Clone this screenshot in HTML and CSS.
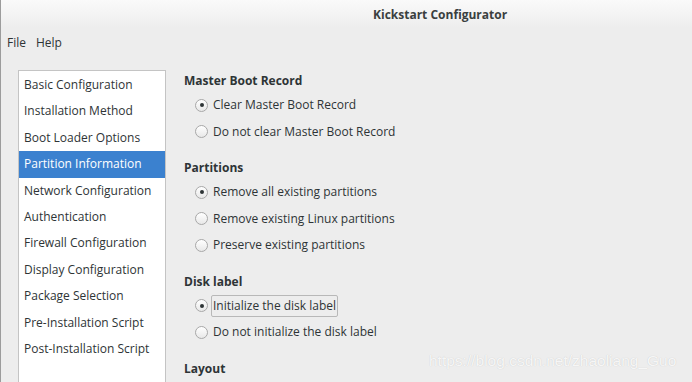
FILE: index.html
```html
<!DOCTYPE html>
<html lang="en">
  <head>
    <meta charset="UTF-8" />
    <meta name="viewport" content="width=device-width, initial-scale=1.0" />
    <title>Kickstart Configurator</title>
    <link rel="stylesheet" href="styles.css">
  </head>
  <body>
    <div class="window">
      <div class="titlebar">
        <span class="title">Kickstart Configurator</span>
      </div>

      <div class="menubar">
        <span class="menu-item">File</span>
        <span class="menu-item">Help</span>
      </div>

      <div class="main">
        <ul class="sidebar">
          <li>Basic Configuration</li>
          <li>Installation Method</li>
          <li>Boot Loader Options</li>
          <li class="selected">Partition Information</li>
          <li>Network Configuration</li>
          <li>Authentication</li>
          <li>Firewall Configuration</li>
          <li>Display Configuration</li>
          <li>Package Selection</li>
          <li>Pre-Installation Script</li>
          <li>Post-Installation Script</li>
        </ul>

        <div class="content">
          <div class="group">
            <div class="group-title">Master Boot Record</div>
            <div class="radio-row">
              <span class="radio checked"></span>
              <span class="label">Clear Master Boot Record</span>
            </div>
            <div class="radio-row">
              <span class="radio"></span>
              <span class="label">Do not clear Master Boot Record</span>
            </div>
          </div>

          <div class="group">
            <div class="group-title">Partitions</div>
            <div class="radio-row">
              <span class="radio checked"></span>
              <span class="label">Remove all existing partitions</span>
            </div>
            <div class="radio-row">
              <span class="radio"></span>
              <span class="label">Remove existing Linux partitions</span>
            </div>
            <div class="radio-row">
              <span class="radio"></span>
              <span class="label">Preserve existing partitions</span>
            </div>
          </div>

          <div class="group">
            <div class="group-title">Disk label</div>
            <div class="radio-row">
              <span class="radio checked"></span>
              <span class="label focused">Initialize the disk label</span>
            </div>
            <div class="radio-row">
              <span class="radio"></span>
              <span class="label">Do not initialize the disk label</span>
            </div>
          </div>

          <div class="group">
            <div class="group-title">Layout</div>
            <div class="layout-frame"></div>
          </div>
        </div>
      </div>

      <div class="watermark">https://blog.csdn.net/zhaoliang_Guo</div>
    </div>
  </body>
</html>
```

FILE: styles.css
```css
* {
  box-sizing: border-box;
}

html,
body {
  margin: 0;
  padding: 0;
}

body {
  width: 692px;
  height: 382px;
  overflow: hidden;
  background: #ededed;
  font-family: 'Open Sans', 'DejaVu Sans', sans-serif;
  font-size: 12px;
  color: #2e3436;
}

.window {
  position: relative;
  height: 382px;
  overflow: hidden;
  border-left: 1px solid #9c9c9c;
}

.titlebar {
  height: 28px;
  padding-left: 372px;
  background: linear-gradient(to bottom, #fafafa 0%, #ededed 100%);
  display: flex;
  align-items: center;
}

.title {
  font-weight: bold;
  font-size: 12px;
  color: #3a3f40;
}

.menubar {
  height: 28px;
  display: flex;
  align-items: center;
  gap: 10px;
  padding-left: 6px;
}

.main {
  display: flex;
  align-items: flex-start;
  padding-top: 14px;
}

/* Left list of sections */
.sidebar {
  list-style: none;
  margin: 0 0 0 17px;
  padding: 1px 0 0 0;
  width: 148px;
  height: 312px;
  background: #fff;
  border: 1px solid #c4c4c4;
  border-bottom: none;
}

.sidebar li {
  height: 26.4px;
  line-height: 26.4px;
  padding-left: 5px;
  white-space: nowrap;
}

.sidebar li.selected {
  background: #3b81cf;
  color: #fff;
}

/* Right side */
.content {
  margin-left: 18px;
  flex: 1;
}

.group + .group {
  margin-top: 12px;
}

.group-title {
  font-weight: bold;
  height: 22px;
  line-height: 22px;
}

.radio-row {
  height: 26.5px;
  display: flex;
  align-items: center;
  padding-left: 11px;
}

.radio {
  width: 13px;
  height: 13px;
  border-radius: 50%;
  border: 1px solid #a8a8a8;
  background: linear-gradient(to bottom, #ffffff, #e8e8e8);
  margin-right: 3px;
  display: flex;
  align-items: center;
  justify-content: center;
}

.radio.checked::after {
  content: '';
  width: 4px;
  height: 4px;
  border-radius: 50%;
  background: #2e3436;
}

.label {
  padding: 1px 1px 2px 1px;
  border: 1px solid transparent;
  line-height: 17px;
}

.label.focused {
  border-color: #b8b8b8;
  border-radius: 2px;
}

.layout-frame {
  margin: 2px 0 0 7px;
  height: 4px;
  border-top: 1px solid #c8c8c8;
  border-left: 1px solid #c8c8c8;
  border-radius: 4px 0 0 0;
}

.watermark {
  position: absolute;
  left: 428px;
  top: 352px;
  font-family: 'Liberation Sans', Arial, sans-serif;
  font-size: 15.5px;
  color: rgba(255, 255, 255, 0.85);
  text-shadow: 0 0 1px rgba(0, 0, 0, 0.18);
  white-space: nowrap;
}
```
